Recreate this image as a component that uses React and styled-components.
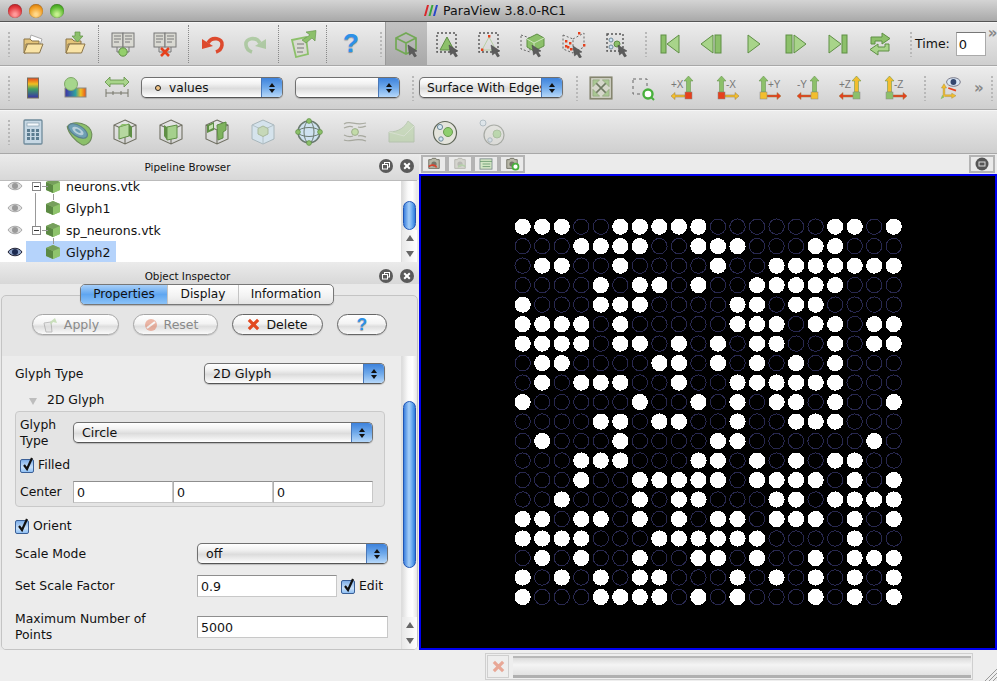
import styled, { createGlobalStyle } from "styled-components";

const GlobalStyle = createGlobalStyle`
  html, body { margin: 0; padding: 0; background: #eee; overflow: hidden; }
  body { font-family: "DejaVu Sans", "Liberation Sans", sans-serif; color: #111; }
`;

const Window = styled.div`
  width: 997px; height: 681px; display: flex; flex-direction: column; overflow: hidden;
`;
const TitleBar = styled.div`
  height: 21px; display: grid; grid-template-columns: 1fr auto 1fr; align-items: center;
  background: linear-gradient(#d4d4d4, #a9a9a9); border-bottom: 1px solid #555;
  font-size: 12.6px;
`;
const Lights = styled.div`display: flex; gap: 7px; padding-left: 8px;`;
const Light = styled.span`
  width: 14px; height: 14px; border-radius: 50%; border: 0;
  background: radial-gradient(circle at 50% 75%, ${p => p.$hi} 10%, ${p => p.$c} 60%, ${p => p.$lo} 100%);
  box-shadow: inset 0 0 1px #0008;
`;
const TitleText = styled.div`display: flex; align-items: center; gap: 5px; padding-right: 7px;`;
const Toolbar = styled.div`
  height: 43px; flex: none; display: flex; align-items: center; padding-left: 7px;
  background: linear-gradient(#ededed, #cfcfcf); border-bottom: 1px solid #a8a8a8;
  box-shadow: inset 0 1px 0 #f6f6f6;
`;
const Handle = styled.i`
  width: 5px; height: 26px; flex: none; margin-left: ${p => p.$ml || 0}px;
  background-image: radial-gradient(circle, #b8b8b8 1px, transparent 1.4px);
  background-size: 4px 4px;
`;
const Tool = styled.div`
  width: ${p => p.$w || 42}px; flex: none; display: flex; align-items: center; justify-content: center;
  margin-left: ${p => p.$ml || 0}px;
  background: ${p => p.$active ? "linear-gradient(#c2c2c2, #a9a9a9)" : "none"};
  box-shadow: ${p => p.$active ? "inset 1px 0 0 #999" : "none"};
  align-self: ${p => p.$active ? "stretch" : "auto"};
  height: ${p => p.$active ? "auto" : "40px"};
`;
const Divider = styled.i`
  width: 0; height: 38px; flex: none; margin: 0 3px 0 2px; border-left: 1px dotted #888;
`;
const Chevrons = styled.span`
  color: #888; font-size: 15px; font-weight: bold; flex: none;
  margin-left: ${p => p.$ml || 0}px;
  align-self: ${p => p.$top ? "flex-start" : "auto"};
  margin-top: ${p => p.$top ? "2px" : "0"};
`;
const TimeLabel = styled.span`font-size: 12.5px; margin-left: 1px; flex: none;`;
const TimeInput = styled.div`
  width: 26px; height: 22px; margin-left: 6px; background: #fff; border: 1px solid #aaa; border-top-color: #777;
  font-size: 13px; padding-left: 2px; line-height: 23px; box-sizing: content-box; flex: none;
`;

const ComboBox = styled.div`
  width: ${p => p.$w}px; height: 21px; box-sizing: border-box; flex: none; position: relative;
  margin-left: ${p => p.$ml || 0}px;
  display: flex; align-items: center; border: 1px solid #707070; border-bottom-color: #555; border-radius: 5px; overflow: hidden;
  background: linear-gradient(#fff 0, #f2f2f2 30%, #dcdcdc 55%, #f2f2f2 85%, #fff 100%);
  font-size: ${p => p.$fs || 12.6}px; white-space: nowrap;
  box-shadow: 0 1px 1px #0003;
`;
const ComboText = styled.span`flex: 1; overflow: hidden; padding-left: ${p => p.$pl || 7}px; display: flex; align-items: center; gap: 8px;`;
const ComboArrows = styled.span`
  width: 20px; height: 100%; flex: none; display: flex; flex-direction: column; align-items: center; justify-content: center; gap: 2px;
  background: linear-gradient(#3d82dc, #6fa9ea 50%, #b6d8fa); border-left: 1px solid #4a78b8;
  &::before, &::after { content: ""; border-left: 3px solid transparent; border-right: 3px solid transparent; }
  &::before { border-bottom: 4px solid #111; }
  &::after { border-top: 4px solid #111; }
`;
const ValueDot = styled.i`
  width: 4px; height: 4px; border-radius: 50%; background: #f3c586; border: 1px solid #222; margin-left: 6px; flex: none;
`;

const Main = styled.div`flex: 1; display: flex; min-height: 0;`;
const LeftColumn = styled.div`width: 419px; flex: none; display: flex; flex-direction: column; background: #e9e9e9;`;
const DockHead = styled.div`
  height: ${p => p.$h}px; flex: none; box-sizing: border-box; padding-top: ${p => p.$pt}px; position: relative;
  text-align: center; font-size: 10.4px; line-height: 14px;
  background: linear-gradient(#ebebeb, #d8d8d8);
  padding-right: 44px;
`;
const DockIcons = styled.div`
  position: absolute; right: 5px; top: ${p => p.$top}px; display: flex; gap: 7px;
`;
const TreePanel = styled.div`
  height: 82px; flex: none; display: flex; background: #fff; margin-right: 2px; overflow: hidden;
  border-top: 1px solid #bbb; box-sizing: border-box;
`;
const TreeRows = styled.div`flex: 1; margin-top: -6px; min-width: 0;`;
const TreeRow = styled.div`height: 22px; display: flex; align-items: center; font-size: 12.5px; position: relative;`;
const EyeCell = styled.div`width: 26px; flex: none; display: flex; justify-content: center; padding-left: 4px; box-sizing: border-box;`;
const TreeCell = styled.div`
  display: flex; align-items: center; gap: 0; height: 100%; position: relative;
  padding-left: ${p => p.$pl}px; padding-right: ${p => p.$pr || 0}px;
  background: ${p => p.$selected ? "#b5d3fb" : "none"};
`;
const TreeLabel = styled.span`margin-left: 5px;`;
const ExpandBox = styled.i`
  position: absolute; left: 6px; top: 7px; width: 7px; height: 7px; background: #fff; border: 1px solid #888;
  &::before { content: ""; position: absolute; left: 1px; right: 1px; top: 3px; height: 1px; background: #333; }
  &::after { content: ""; position: absolute; left: 9px; width: 6px; top: 3px; height: 1px; background: #999; }
`;
const TreeLine = styled.i`
  position: absolute; left: ${p => p.$x}px; top: ${p => p.$y}px; width: 1px; height: ${p => p.$h}px; background: #999;
`;

const ScrollBar = styled.div`width: 16px; flex: none; display: flex; flex-direction: column; background: #fff; border-left: 1px solid #ddd; box-sizing: border-box;`;
const ScrollTrack = styled.div`
  flex: 1; padding: ${p => p.$top}px 1px 0 1px; min-height: 0; overflow: hidden;
  background: linear-gradient(90deg, #dcdcdc, #fafafa 40%, #fff 70%, #e6e6e6);
`;
const ScrollThumb = styled.div`
  height: ${p => p.$h}px; border-radius: 7px; border: 1px solid #1f55b4;
  background: linear-gradient(90deg, #3c80de, #a6cff8 45%, #6fb0f2 70%, #2f79da);
`;
const ScrollArrows = styled.div`
  height: ${p => p.$h}px; flex: none; display: flex; flex-direction: column; align-items: center; justify-content: space-around;
  background: linear-gradient(90deg, #e8e8e8, #fff);
  &::before, &::after { content: ""; border-left: 4px solid transparent; border-right: 4px solid transparent; }
  &::before { border-bottom: 6px solid #666; }
  &::after { border-top: 6px solid #666; }
`;

const Tabs = styled.div`
  display: flex; width: 254px; height: 21px; margin-left: 80px; position: relative; z-index: 1; flex: none;
  border: 1px solid #777; border-radius: 5px; overflow: hidden; box-sizing: border-box; background: linear-gradient(#fff, #f2f2f2 60%, #e4e4e4);
  box-shadow: 0 1px 1px #0003;
`;
const Tab = styled.div`
  width: ${p => p.$w}px; flex: none; text-align: center; font-size: 12.2px; line-height: 19px; box-sizing: border-box;
  border-right: 1px solid #c4c4c4;
  background: ${p => p.$active ? "linear-gradient(#a8cff8, #5fa6f0 50%, #8cc3f8)" : "none"};
  &:last-child { border-right: 0; }
`;
const Pane = styled.div`
  flex: 1; margin: -10px 1px 0 1px; padding-top: 18px; display: flex; flex-direction: column; min-height: 0;
  background: #e5e5e5; border: 1px solid #c4c4c4; border-radius: 5px; overflow: hidden;
`;
const ActionRow = styled.div`display: flex; gap: 14px; padding-left: 30px; height: 21px; flex: none; margin-bottom: 21px;`;
const PillButton = styled.div`
  width: ${p => p.$w}px; box-sizing: border-box; border: 1px solid ${p => p.$off ? "#a6a6a6" : "#666"}; border-radius: 11px;
  background: linear-gradient(#fff, #f3f3f3 45%, #dedede 60%, #fafafa);
  color: ${p => p.$off ? "#8a8a8a" : "#111"}; font-size: 12.5px;
  display: flex; align-items: center; justify-content: center; gap: 6px;
  padding-right: ${p => p.$pr || 0}px;
  box-shadow: 0 1px 1px #0002;
`;
const HelpMark = styled.span`color: #2c90e8; font: bold ${p => p.$size}px "Liberation Sans", sans-serif; text-shadow: 0 1px 1px #0005;`;

const FormArea = styled.div`flex: 1; display: flex; min-height: 0; background: #ececec;`;
const Form = styled.div`flex: 1; min-width: 0; padding-left: 13px; overflow: hidden; font-size: 12.4px; line-height: 16px;`;
const FieldRow = styled.div`
  display: grid; grid-template-columns: ${p => p.$label}px ${p => p.$field}px; align-items: center; width: max-content;
  margin-top: ${p => p.$mt}px; height: ${p => p.$h}px;
`;
const SectionRow = styled.div`display: flex; align-items: center; height: 16px; margin: 8px 0 3px 14px; gap: 10px;`;
const Triangle = styled.i`
  width: 0; height: 0; border-left: 4px solid transparent; border-right: 4px solid transparent; border-top: 7px solid #bdbdbd; margin-top: 2px;
`;
const Group = styled.div`
  width: 370px; height: 96px; box-sizing: border-box; padding: 4px 11px 4px 4px; background: #e4e4e4;
  border: 1px solid #c9c9c9; border-radius: 4px;
`;
const GroupRow = styled.div`
  display: grid; grid-template-columns: 53px 300px; align-items: center; height: ${p => p.$h}px; margin-top: ${p => p.$mt}px;
`;
const TextField = styled.div`
  height: 22px; box-sizing: border-box; background: #fff; border: 1px solid #c8c8c8; border-top-color: #8e8e8e; border-left-color: #b0b0b0;
  padding-left: 3px; font-size: 12.6px; line-height: 21px; width: ${p => p.$w ? p.$w + "px" : "auto"};
`;
const TripleField = styled.div`display: grid; grid-template-columns: 100px 100px 100px;`;
const CheckRow = styled.div`display: flex; align-items: center; height: 16px; gap: 4px; margin-top: ${p => p.$mt || 0}px; margin-left: ${p => p.$ml || 0}px;`;
const CheckBox = styled.i`
  width: 14px; height: 14px; margin-top: 2px; box-sizing: border-box; position: relative; flex: none;
  background: linear-gradient(#7eaee8, #c9e1fa 60%, #8fc0f4); border: 1px solid #3a5f96; border-radius: 2px;
`;
const EditCell = styled.div`display: flex; align-items: center; gap: 4px;`;

const ViewColumn = styled.div`flex: 1; display: flex; flex-direction: column; min-width: 0; background: #e9e9e9;`;
const ViewStrip = styled.div`height: 20px; flex: none; display: flex; align-items: center; padding: 0 2px; background: #ebebeb; gap: 0;`;
const ViewButton = styled.div`
  width: 26px; height: 18px; box-sizing: border-box; border: 2px solid #b4b4b4;
  display: flex; align-items: center; justify-content: center; background: #eaeaea;
  margin-left: ${p => p.$auto ? "auto" : "0"};
`;
const RenderView = styled.div`flex: 1; background: #000; border: 2px solid #0000f0; min-height: 0;`;
const Canvas = styled.svg`display: block; width: 100%; height: 100%;`;

const StatusBar = styled.div`
  height: 31px; flex: none; display: flex; align-items: flex-start; background: #eeeeee; padding: 3px 0 0 485px; box-sizing: border-box; position: relative;
`;
const StatusBox = styled.div`
  width: 488px; height: 27px; box-sizing: border-box; display: flex; align-items: center; border: 1px solid #cfcfcf; padding-left: 1px;
`;
const ClearBox = styled.div`
  width: 22px; height: 23px; box-sizing: border-box; border: 1px solid #cfcfcf; flex: none; display: flex; align-items: center; justify-content: center;
`;
const Progress = styled.div`
  flex: 1; height: 22px; margin: 0 1px 0 4px; box-sizing: border-box; border-top: 2px solid #b8b8b8; border-bottom: 3px solid #b0b0b0;
  background: linear-gradient(#dcdcdc, #f4f4f4 40%, #e2e2e2);
`;
const Grip = styled.svg`position: absolute; right: 0; bottom: 0;`;
const Svg = styled.svg`display: block; flex: none; opacity: ${p => p.$dim ? 0.42 : 1};`;

const I = ({ size = 28, dim, children }) => (
  <Svg width={size} height={size} viewBox="0 0 28 28" $dim={dim}>{children}</Svg>
);

const GREEN = "#8cc06a", DGREEN = "#5f8f45", RED = "#e6401c", YEL = "#f2be2e";

const Cursor = ({ x = 0, y = 0 }) => (
  <path transform={`translate(${x} ${y})`} d="M0 0 L9 6 L6 6.8 L8.5 11 L6.5 12 L4 8 L1.5 10 Z" fill="#5c5c5c" stroke="#444" strokeWidth=".5" />
);
const Folder = () => (
  <>
    <path d="M5 9h6l2 2h7v3H7v9H5z" fill="#e4c47a" stroke="#8a7448" />
    <path d="M5 23 L8.5 14 H24 L20.5 23 Z" fill="#f9e3a6" stroke="#8a7448" />
  </>
);
const OpenIcon = () => (
  <I><path d="M12 5 L23 9 L21 15 L10 13 Z" fill="#fff" stroke="#aaa" /><Folder /></I>
);
const ImportIcon = () => (
  <I><Folder /><path d="M14 2h5v4h3l-5.5 6L11 6h3z" fill={GREEN} stroke={DGREEN} strokeWidth=".7" /></I>
);
const Servers = () => (
  <>
    {[3, 14].map(x => (
      <g key={x}>
        <rect x={x} y="3" width="11" height="14" fill="#d9d9d2" stroke="#777" />
        <path d={`M${x + 2} 6h7M${x + 2} 9h7M${x + 2} 12h5`} stroke="#7a7a7a" fill="none" />
      </g>
    ))}
    <path d="M8 17v5h12v-5" fill="none" stroke="#777" />
  </>
);
const ConnectIcon = () => (<I><Servers /><circle cx="14" cy="22" r="4.2" fill="#94cf6c" stroke={DGREEN} /></I>);
const DisconnectIcon = () => (
  <I><Servers /><path d="M10 18l8 8M18 18l-8 8" stroke={RED} strokeWidth="2.6" /></I>
);
const UndoIcon = ({ flip, color = "#dd4a2e", dim }) => (
  <I dim={dim}>
    <g transform={flip ? "translate(28 0) scale(-1 1)" : undefined}>
      <path d="M9 13 C13 6, 24 8, 23 15 C22.5 19, 20 21, 17 22" fill="none" stroke={color} strokeWidth="3.6" />
      <path d="M3 9 L14 16 L3 19 Z" fill={color} />
    </g>
  </I>
);
const ServerArrowIcon = () => (
  <I>
    <path d="M3 10 L17 7 L19 24 L7 27 Z" fill="#d9d9d2" stroke={GREEN} strokeWidth="1.8" />
    <path d="M8 14h7M8 18h7M8 22h6" stroke="#777" />
    <path d="M13 10 L21 5 L17 2 L27 0.5 L26 11 L23 8 L17 13 Z" fill={GREEN} stroke={DGREEN} strokeWidth=".6" />
  </I>
);
const WireCube = ({ color = GREEN }) => (
  <path d="M14 3 L24 8 V19 L14 24 L4 19 V8 Z M4 8 L14 13 L24 8 M14 13 V24" fill="none" stroke={color} strokeWidth="1.7" />
);
const CubeSelectIcon = () => (<I><WireCube color="#72a855" /><Cursor x={16} y={15} /></I>);
const DashBox = ({ x = 3, y = 3, w = 19, h = 19 }) => (
  <rect x={x} y={y} width={w} height={h} fill="none" stroke="#555" strokeWidth="1.4" strokeDasharray="2 2" />
);
const SurfaceSelectIcon = () => (
  <I><DashBox /><path d="M13 7 L20 20 H6 Z" fill={GREEN} stroke={DGREEN} /><Cursor x={15} y={15} /></I>
);
const PointSelectIcon = () => (
  <I>
    <DashBox />
    <path d="M13 7 L20 20 H6 Z" fill="none" stroke="#b8cfa5" />
    <path d="M12 5h2.4v2.4H12zM5 18.5h2.4v2.4H5zM18 18.5h2.4v2.4H18z" fill={RED} />
    <Cursor x={15} y={15} />
  </I>
);
const FrustumIcon = () => (
  <I>
    <path d="M3 5 L12 8 V22 L3 19 Z" fill="none" stroke="#666" strokeDasharray="2 2" />
    <path d="M9 9 L19 4 L26 8 V16 L16 21 L9 17 Z" fill={GREEN} stroke={DGREEN} />
    <path d="M9 9 L16 13 L26 8 M16 13 V21" fill="none" stroke="#cfe6bf" />
    <Cursor x={14} y={15} />
  </I>
);
const FrustumPointsIcon = () => (
  <I>
    <path d="M3 5 L13 9 V23 L3 19 Z M13 9 L24 3 V17 L13 23" fill="none" stroke="#666" strokeDasharray="2 2" />
    <path d="M5 10h2.4v2.4H5zM9 12h2.4v2.4H9zM7 16h2.4v2.4H7zM10 18h2.4v2.4H10zM18 2h2.4v2.4H18zM23 14h2.4v2.4H23zM5 15h2.4v2.4H5z" fill={RED} />
    <Cursor x={13} y={16} />
  </I>
);
const BlockSelectIcon = () => (
  <I>
    <DashBox x={5} y={4} w={16} h={17} />
    <circle cx="9" cy="10" r="2" fill="#cfe2f2" stroke="#6f8a9a" />
    <circle cx="9" cy="17" r="2" fill="#cfe2f2" stroke="#6f8a9a" />
    <circle cx="15" cy="14" r="3" fill={GREEN} stroke={DGREEN} />
    <Cursor x={16} y={15} />
  </I>
);
const FirstIcon = () => (
  <I><rect x="5" y="5" width="5" height="18" fill={GREEN} stroke={DGREEN} /><path d="M11 14 L23 5 V23 Z" fill="#a8d48a" stroke={DGREEN} /></I>
);
const BackIcon = () => (
  <I><path d="M3 14 L15 5 V23 Z" fill="#a8d48a" stroke={DGREEN} /><rect x="17" y="5" width="6" height="18" fill={GREEN} stroke={DGREEN} /></I>
);
const PlayIcon = () => (<I><path d="M8 5 L20 14 L8 23 Z" fill="#a8d48a" stroke={DGREEN} /></I>);
const ForwardIcon = () => (
  <I><rect x="4" y="5" width="6" height="18" fill={GREEN} stroke={DGREEN} /><path d="M12 5 L24 14 L12 23 Z" fill="#a8d48a" stroke={DGREEN} /></I>
);
const LastIcon = () => (
  <I><path d="M5 5 L17 14 L5 23 Z" fill="#a8d48a" stroke={DGREEN} /><rect x="18" y="5" width="5" height="18" fill={GREEN} stroke={DGREEN} /></I>
);
const LoopIcon = () => (
  <I>
    <path d="M5 14 V7 H16 V3 L24 8.5 L16 14 V11 H9 V14 Z" fill={GREEN} stroke={DGREEN} />
    <path d="M23 14 V21 H12 V25 L4 19.5 L12 14 V17 H19 V14 Z" fill="#a8d48a" stroke={DGREEN} />
  </I>
);
const ColorMapIcon = () => (
  <I>
    <defs>
      <linearGradient id="cm" x1="0" y1="0" x2="0" y2="1">
        <stop offset="0" stopColor="#e8431c" /><stop offset=".3" stopColor="#f0c020" />
        <stop offset=".55" stopColor="#3fa060" /><stop offset="1" stopColor="#3a30a8" />
      </linearGradient>
    </defs>
    <rect x="8.5" y="4" width="11" height="20" fill="url(#cm)" stroke="#77705c" />
  </I>
);
const LegendIcon = () => (
  <I>
    <defs>
      <linearGradient id="lg" x1="0" y1="0" x2="1" y2="0">
        <stop offset="0" stopColor="#4030a8" /><stop offset=".5" stopColor="#30a0a0" />
        <stop offset=".75" stopColor="#f0c020" /><stop offset="1" stopColor="#e8501c" />
      </linearGradient>
    </defs>
    <rect x="4" y="14" width="21" height="9" fill="url(#lg)" stroke="#8a8a80" />
    <circle cx="10" cy="10" r="6.5" fill="#a6d68c" stroke="#7fa868" />
  </I>
);
const RescaleIcon = () => (
  <I>
    <path d="M2 8 L7 3 V6 H21 V3 L26 8 L21 13 V10 H7 V13 Z" fill="#a8d48a" stroke={DGREEN} strokeWidth=".8" />
    <path d="M3 19H25M3 15V23M10 17V21M18 17V21M25 15V23" fill="none" stroke="#77776a" />
  </I>
);
const ZoomFitIcon = () => (
  <I size={24}>
    <rect x="1.5" y="1.5" width="25" height="25" fill="#d5d7ca" stroke="#85856f" strokeWidth="2" />
    <path d="M6 6 L22 22 M22 6 L6 22" stroke="#6f7a62" strokeWidth="1.8" />
    <path d="M4.5 4.5h8l-8 8zM23.5 4.5v8l-8-8zM4.5 23.5v-8l8 8zM23.5 23.5h-8l8-8z" fill="#a9c893" stroke="#84966f" strokeWidth=".6" />
  </I>
);
const ZoomBoxIcon = () => (
  <I>
    <rect x="5" y="5" width="14" height="15" fill="none" stroke="#666" strokeDasharray="3 3" />
    <circle cx="20" cy="20" r="4.5" fill="#fff" stroke="#48b03c" strokeWidth="2.4" />
    <path d="M23 23l3 3" stroke="#48b03c" strokeWidth="2" />
  </I>
);
const AxisIcon = ({ label, side, square, horiz, vert }) => {
  const sx = side === "right" ? 15 : 6;
  const hPath = side === "right"
    ? "M15 21 H5 V18.5 L1 22 L5 25.5 V23 H15 Z"
    : "M13 21 H23 V18.5 L27 22 L23 25.5 V23 H13 Z";
  const vx = sx + 3.5;
  return (
    <I>
      <path d={hPath} fill={horiz} stroke="#9a7a40" strokeWidth=".5" />
      <path d={`M${vx - 2} 18 V7 H${vx - 4.5} L${vx} 2 L${vx + 4.5} 7 H${vx + 2} V18 Z`} fill={vert} stroke={DGREEN} strokeWidth=".5" />
      <rect x={sx} y="18" width="7" height="7" fill={square} stroke="#888" strokeWidth=".5" />
      <text x={side === "right" ? 1 : 14} y="14" fontSize="10" fill="#777" fontFamily="'Liberation Sans', sans-serif">{label}</text>
    </I>
  );
};
const CameraEyeIcon = () => (
  <I size={24}>
    <path d="M6 25 V14 L4 14 L7 9 L10 14 L8 14 V22 H16 V20 L21 23 L16 26 V24 H8" fill={YEL} stroke="#a88a30" strokeWidth=".5" />
    <path d="M7 25 L3 27 L5 22 Z" fill={GREEN} />
    <ellipse cx="18" cy="7" rx="8" ry="5" fill="#d9e6f4" stroke="#667" />
    <circle cx="18" cy="7" r="3.4" fill="#34466e" />
    <path d="M12 14l9 3" stroke={RED} strokeWidth="2" />
  </I>
);
const CalculatorIcon = () => (
  <I>
    <rect x="5" y="2" width="18" height="24" rx="1" fill="#c7d8e4" stroke="#6f8a9a" strokeWidth="1.3" />
    <rect x="8" y="5" width="12" height="3" fill="#f3f7fa" stroke="#7a93a3" strokeWidth=".6" />
    {[11, 15, 19].map(y => [8, 12.5, 17].map(x => (
      <rect key={`${x}-${y}`} x={x} y={y} width="3" height="3" fill="#5b7c90" />
    )))}
  </I>
);
const ClipIcon = () => (
  <I size={30}>
    <path d="M3 9 C9 2, 25 6, 26 16 C26 24, 20 27, 17 26 C10 22, 4 15, 3 9 Z" fill="#8cc06a" stroke="#6d8a5a" />
    <ellipse cx="13" cy="13" rx="10" ry="5" transform="rotate(32 13 13)" fill="#6e9fb4" stroke="#5a7f8c" />
    <ellipse cx="13" cy="13" rx="6" ry="2.8" transform="rotate(32 13 13)" fill="#b7cfda" />
    <ellipse cx="13" cy="13" rx="3" ry="1.2" transform="rotate(32 13 13)" fill="#6e9fb4" />
  </I>
);
const BoxFrame = () => (
  <path d="M14 2 L25 7 V21 L14 26 L3 21 V7 Z M3 7 L14 12 L25 7 M14 12 V26" fill="none" stroke="#6f6f62" strokeWidth="1.1" />
);
const ThresholdIcon = () => (
  <I><BoxFrame /><path d="M8 9 L18 6 V18 L8 21 Z" fill="#b6d8a0" stroke={DGREEN} /><path d="M18 6 L21 9 V20 L18 18 Z" fill={DGREEN} /><path d="M8 9 L11 6 L18 6" fill={GREEN} /></I>
);
const ContourIcon = () => (
  <I><BoxFrame /><path d="M10 9 L20 7 V20 L10 22 Z" fill="#a5d08c" stroke={DGREEN} /><path d="M10 9 L7 7 V18 L10 22 Z" fill={DGREEN} /></I>
);
const SliceIcon = () => (
  <I>
    <BoxFrame />
    <path d="M4 7 L11 4 V12 L4 15 Z" fill={DGREEN} />
    <path d="M14 7 L23 4 V12 L20 14 V20 L15 22 Z" fill="#7fb35e" stroke={DGREEN} />
    <path d="M6 8 L10 6 V10 L6 12 Z" fill="#c6e3b2" />
  </I>
);
const FadedCubeIcon = () => (
  <I>
    <path d="M14 2 L25 7 V21 L14 26 L3 21 V7 Z" fill="#d5e3ec" stroke="#a8b6bb" />
    <path d="M3 7 L14 12 L25 7 M14 12 V26" fill="none" stroke="#b2c0c6" />
    <path d="M14 8 L19 10.5 V16 L14 18.5 L9 16 V10.5 Z" fill="#c6d8b8" stroke="#a8b89a" />
  </I>
);
const SphereNodesIcon = () => (
  <I>
    <circle cx="14" cy="14" r="11" fill="#cfe2f0" stroke="#6b7a70" strokeWidth="1.6" />
    <ellipse cx="14" cy="14" rx="5" ry="11" fill="none" stroke="#6b7a70" />
    <ellipse cx="14" cy="14" rx="11" ry="4.5" fill="none" stroke="#6b7a70" />
    {[[14, 3], [14, 25], [3, 14], [25, 14]].map(([x, y]) => (
      <circle key={x + "-" + y} cx={x} cy={y} r="2.4" fill={GREEN} stroke={DGREEN} strokeWidth=".7" />
    ))}
  </I>
);
const StreamIcon = () => (
  <I>
    <g fill="none" stroke="#8b8d7e" strokeWidth="1.2" opacity=".65">
      <path d="M3 6 C9 2, 14 8, 25 5" />
      <path d="M3 10 C7 8, 10 8, 12 9 M17 9 C20 10, 22 9, 25 8" />
      <path d="M3 17 C7 19, 10 19, 12 18 M17 18 C20 17, 22 18, 25 19" />
      <path d="M3 22 C9 25, 14 19, 25 23" />
    </g>
    <circle cx="14" cy="14" r="3.4" fill="#c2dba8" stroke="#9eae8c" />
  </I>
);
const WarpIcon = () => (
  <I dim>
    <path d="M2 24 V14 C12 14, 18 9, 21 3 L27 8 V24 Z" fill="#a9cf8e" stroke="#88a878" />
    <path d="M2 14 L17 18 L27 8" fill="none" stroke="#cfe3bf" />
  </I>
);
const BlobsIcon = ({ dim }) => (
  <I dim={dim}>
    <circle cx="14" cy="15" r="11.5" fill="#e4e4dc" stroke="#5f6658" strokeWidth="1.2" />
    <circle cx="17" cy="14" r="4.5" fill="#8ecf6e" stroke="#6a9a50" />
    <circle cx="9" cy="9" r="2.6" fill="#d5e6f2" stroke="#6f8a9a" />
    <circle cx="10" cy="21" r="2.2" fill="#d5e6f2" stroke="#6f8a9a" />
  </I>
);
const BlobsOutIcon = () => (
  <I dim>
    <circle cx="16" cy="17" r="10" fill="#e4e4dc" stroke="#5f6658" strokeWidth="1.2" />
    <circle cx="19" cy="16" r="4" fill="#8ecf6e" stroke="#6a9a50" />
    <circle cx="5" cy="5" r="3" fill="#d5e6f2" stroke="#6f8a9a" />
    <circle cx="12" cy="22" r="2.2" fill="#d5e6f2" stroke="#6f8a9a" />
  </I>
);
const EyeIcon = ({ on }) => (
  <Svg width="16" height="10" viewBox="0 0 16 10">
    <path d="M1 5 C4 0, 12 0, 15 5 C12 10, 4 10, 1 5 Z" fill={on ? "#8fa4c8" : "#ddd"} stroke={on ? "#223" : "#aaa"} />
    <circle cx="8" cy="5" r="3" fill={on ? "#1c2a50" : "#999"} />
  </Svg>
);
const SmallCube = () => (
  <Svg width="16" height="16" viewBox="0 0 16 16">
    <path d="M8 1 L15 4 V12 L8 15 L1 12 V4 Z" fill="#8cc06a" />
    <path d="M1 4 L8 7 V15 L1 12 Z" fill="#5c8a44" />
    <path d="M8 7 L15 4 V12 L8 15 Z" fill="#8fc46c" />
    <path d="M1 4 L8 1 L15 4 L8 7 Z" fill="#769f5c" />
  </Svg>
);
const FloatIcon = () => (
  <Svg width="14" height="14" viewBox="0 0 14 14">
    <circle cx="7" cy="7" r="7" fill="#5a5a5a" />
    <rect x="5.5" y="3.5" width="5" height="4.5" fill="none" stroke="#fff" />
    <rect x="3.5" y="5.5" width="5" height="4.5" fill="#5a5a5a" stroke="#fff" />
  </Svg>
);
const CloseIcon = () => (
  <Svg width="14" height="14" viewBox="0 0 14 14">
    <circle cx="7" cy="7" r="7" fill="#5a5a5a" />
    <path d="M4.2 4.2 L9.8 9.8 M9.8 4.2 L4.2 9.8" stroke="#fff" strokeWidth="2" />
  </Svg>
);
const RedX = ({ size = 14, dim }) => (
  <Svg width={size} height={size} viewBox="0 0 14 14" $dim={dim}>
    <path d="M2 2 L12 12 M12 2 L2 12" stroke="#e2481f" strokeWidth="3.4" />
  </Svg>
);
const NoEntry = () => (
  <Svg width="14" height="14" viewBox="0 0 14 14" $dim>
    <circle cx="7" cy="7" r="6" fill="#e0603a" />
    <path d="M3 10 L11 4" stroke="#fff" strokeWidth="2" />
  </Svg>
);
const ApplyMark = () => (
  <Svg width="16" height="16" viewBox="0 0 16 16" $dim>
    <path d="M2 6 L9 5 L10 15 L4 15 Z" fill="#ddd" stroke="#777" />
    <path d="M8 5 L13 1 L15 6 L11 5 L9 8 Z" fill={GREEN} />
  </Svg>
);
const Check = () => (
  <svg width="14" height="18" viewBox="0 0 14 18" style={{ position: "absolute", left: 0, top: -5 }}>
    <path d="M3 10 L6 14 L11 3" fill="none" stroke="#111" strokeWidth="2.2" />
  </svg>
);
const ParaLogo = () => (
  <svg width="14" height="11" viewBox="0 0 14 11">
    <path d="M0 11 L3 0 H5 L2 11 Z" fill="#d8282c" />
    <path d="M4.5 11 L7.5 0 H9.5 L6.5 11 Z" fill="#39a63a" />
    <path d="M9 11 L12 0 H14 L11 11 Z" fill="#2848c8" />
  </svg>
);
const Cam = ({ children, dim }) => (
  <Svg width="18" height="14" viewBox="0 0 18 16" $dim={dim}>
    <path d="M3 3h3l1-1.5h4L12 3h3v10H3z" fill="#b8b8a8" stroke="#6a6a5c" />
    <circle cx="9" cy="8" r="3" fill="#77776a" />
    {children}
  </Svg>
);

const CELLS = [
  "11100111110000001101",
  "00011110011100011000",
  "01100100001001111111",
  "00001011010011111000",
  "10001110000110110000",
  "11110100000111011011",
  "11110110101011001011",
  "01100001101010101000",
  "01011100100111111000",
  "10000010010101101001",
  "00001101100100111000",
  "01000100001100000010",
  "00011100011010101100",
  "00010011111011110101",
  "00100010110001101111",
  "11011010101101110101",
  "11110001111110000100",
  "01010010011010010111",
  "10101011000101010101",
  "10001111010100010101",
];

// glyph centres come straight from the screenshot, in page pixels
const GlyphGrid = () => (
  <Canvas viewBox="421 176 574 472" preserveAspectRatio="none" shapeRendering="crispEdges">
    {CELLS.map((row, r) => row.split("").map((cell, c) => (
      <circle
        key={`${r}-${c}`}
        cx={522.67 + c * 19.53}
        cy={226.67 + r * 19.49}
        r={cell === "1" ? 8.1 : 7.7}
        fill={cell === "1" ? "#fff" : "none"}
        stroke={cell === "1" ? "none" : "#28284f"}
      />
    )))}
  </Canvas>
);

export default function App() {
  return (
    <Window>
      <GlobalStyle />
      <TitleBar>
        <Lights>
          <Light $c="#e0353a" $hi="#ff9a9a" $lo="#9c1418" />
          <Light $c="#f09a1e" $hi="#ffd88a" $lo="#b0600c" />
          <Light $c="#58b82e" $hi="#c6f08e" $lo="#2e7c14" />
        </Lights>
        <TitleText><ParaLogo />ParaView 3.8.0-RC1</TitleText>
        <div />
      </TitleBar>

      <Toolbar>
        <Handle />
        <Tool><OpenIcon /></Tool>
        <Tool><ImportIcon /></Tool>
        <Divider />
        <Tool><ConnectIcon /></Tool>
        <Tool><DisconnectIcon /></Tool>
        <Divider />
        <Tool><UndoIcon /></Tool>
        <Tool><UndoIcon flip color="#6fae55" dim /></Tool>
        <Divider />
        <Tool><ServerArrowIcon /></Tool>
        <Divider />
        <Tool><HelpMark $size={26}>?</HelpMark></Tool>
        <Handle $ml={7} />
        <Tool $active $ml={1}><CubeSelectIcon /></Tool>
        <Tool><SurfaceSelectIcon /></Tool>
        <Tool><PointSelectIcon /></Tool>
        <Tool><FrustumIcon /></Tool>
        <Tool><FrustumPointsIcon /></Tool>
        <Tool><BlockSelectIcon /></Tool>
        <Handle $ml={7} />
        <Tool><FirstIcon /></Tool>
        <Tool><BackIcon /></Tool>
        <Tool><PlayIcon /></Tool>
        <Tool><ForwardIcon /></Tool>
        <Tool><LastIcon /></Tool>
        <Tool><LoopIcon /></Tool>
        <Handle $ml={8} />
        <TimeLabel>Time:</TimeLabel>
        <TimeInput>0</TimeInput>
        <Chevrons $ml={2} $top>»</Chevrons>
      </Toolbar>

      <Toolbar>
        <Handle />
        <Tool><ColorMapIcon /></Tool>
        <Tool><LegendIcon /></Tool>
        <Tool><RescaleIcon /></Tool>
        <ComboBox $w={142} $ml={3} $fs={12.2}>
          <ComboText><ValueDot />values</ComboText>
          <ComboArrows />
        </ComboBox>
        <ComboBox $w={105} $ml={12}>
          <ComboText />
          <ComboArrows />
        </ComboBox>
        <Handle $ml={11} />
        <ComboBox $w={144} $ml={3} $fs={12.2}>
          <ComboText>Surface With Edges</ComboText>
          <ComboArrows />
        </ComboBox>
        <Handle $ml={12} />
        <Tool $w={41}><ZoomFitIcon /></Tool>
        <Tool><ZoomBoxIcon /></Tool>
        <Tool><AxisIcon label="+X" side="right" square={RED} horiz={YEL} vert={GREEN} /></Tool>
        <Tool><AxisIcon label="-X" side="left" square={RED} horiz={YEL} vert={GREEN} /></Tool>
        <Tool><AxisIcon label="+Y" side="left" square={YEL} horiz={RED} vert={GREEN} /></Tool>
        <Tool><AxisIcon label="-Y" side="right" square={YEL} horiz={RED} vert={GREEN} /></Tool>
        <Tool><AxisIcon label="+Z" side="right" square={GREEN} horiz={RED} vert={YEL} /></Tool>
        <Tool><AxisIcon label="-Z" side="left" square={GREEN} horiz={RED} vert={YEL} /></Tool>
        <Handle $ml={8} />
        <Tool $w={28} $ml={8}><CameraEyeIcon /></Tool>
        <Chevrons $ml={10}>»</Chevrons>
        <Handle $ml={6} />
      </Toolbar>

      <Toolbar>
        <Handle />
        <Tool><CalculatorIcon /></Tool>
        <Tool $ml={4}><ClipIcon /></Tool>
        <Tool $ml={4}><ThresholdIcon /></Tool>
        <Tool $ml={4}><ContourIcon /></Tool>
        <Tool $ml={4}><SliceIcon /></Tool>
        <Tool $ml={4}><FadedCubeIcon /></Tool>
        <Tool $ml={4}><SphereNodesIcon /></Tool>
        <Tool $ml={4}><StreamIcon /></Tool>
        <Tool $ml={4}><WarpIcon /></Tool>
        <Tool $ml={2}><BlobsIcon /></Tool>
        <Tool $ml={5}><BlobsOutIcon /></Tool>
      </Toolbar>

      <Main>
        <LeftColumn>
          <DockHead $h={26} $pt={6}>
            Pipeline Browser
            <DockIcons $top={5}><FloatIcon /><CloseIcon /></DockIcons>
          </DockHead>
          <TreePanel>
            <TreeRows>
              <TreeRow>
                <EyeCell><EyeIcon /></EyeCell>
                <TreeCell $pl={19}><ExpandBox /><SmallCube /><TreeLabel>neurons.vtk</TreeLabel></TreeCell>
              </TreeRow>
              <TreeRow>
                <EyeCell><EyeIcon /></EyeCell>
                <TreeLine $x={35} $y={-4} $h={26} />
                <TreeLine $x={53} $y={-3} $h={6} />
                <TreeCell $pl={19}><SmallCube /><TreeLabel>Glyph1</TreeLabel></TreeCell>
              </TreeRow>
              <TreeRow>
                <EyeCell><EyeIcon /></EyeCell>
                <TreeLine $x={35} $y={-2} $h={10} />
                <TreeCell $pl={19}><ExpandBox /><SmallCube /><TreeLabel>sp_neurons.vtk</TreeLabel></TreeCell>
              </TreeRow>
              <TreeRow>
                <EyeCell><EyeIcon on /></EyeCell>
                <TreeCell $pl={19} $pr={6} $selected><SmallCube /><TreeLabel>Glyph2</TreeLabel></TreeCell>
                <TreeLine $x={53} $y={-3} $h={6} />
              </TreeRow>
            </TreeRows>
            <ScrollBar>
              <ScrollTrack $top={20}><ScrollThumb $h={27} /></ScrollTrack>
              <ScrollArrows $h={32} />
            </ScrollBar>
          </TreePanel>

          <DockHead $h={22} $pt={7}>
            Object Inspector
            <DockIcons $top={7}><FloatIcon /><CloseIcon /></DockIcons>
          </DockHead>
          <Tabs>
            <Tab $w={87} $active>Properties</Tab>
            <Tab $w={71}>Display</Tab>
            <Tab $w={94}>Information</Tab>
          </Tabs>
          <Pane>
            <ActionRow>
              <PillButton $w={87} $off $pr={10}><ApplyMark />Apply</PillButton>
              <PillButton $w={85} $off $pr={9}><NoEntry />Reset</PillButton>
              <PillButton $w={91}><RedX size={13} />Delete</PillButton>
              <PillButton $w={50}><HelpMark $size={17}>?</HelpMark></PillButton>
            </ActionRow>
            <FormArea>
              <Form>
                <FieldRow $label={189} $field={181} $mt={7} $h={21}>
                  <span>Glyph Type</span>
                  <ComboBox $w={181}><ComboText $pl={8}>2D Glyph</ComboText><ComboArrows /></ComboBox>
                </FieldRow>
                <SectionRow><Triangle />2D Glyph</SectionRow>
                <Group>
                  <GroupRow $h={33}>
                    <span>Glyph<br />Type</span>
                    <ComboBox $w={300}><ComboText $pl={8}>Circle</ComboText><ComboArrows /></ComboBox>
                  </GroupRow>
                  <CheckRow $mt={8}><CheckBox><Check /></CheckBox>Filled</CheckRow>
                  <GroupRow $h={22} $mt={8}>
                    <span>Center</span>
                    <TripleField><TextField>0</TextField><TextField>0</TextField><TextField>0</TextField></TripleField>
                  </GroupRow>
                </Group>
                <CheckRow $mt={11}><CheckBox><Check /></CheckBox>Orient</CheckRow>
                <FieldRow $label={182} $field={191} $mt={9} $h={21}>
                  <span>Scale Mode</span>
                  <ComboBox $w={191}><ComboText $pl={8}>off</ComboText><ComboArrows /></ComboBox>
                </FieldRow>
                <FieldRow $label={182} $field={191} $mt={11} $h={22}>
                  <span>Set Scale Factor</span>
                  <EditCell>
                    <TextField $w={140}>0.9</TextField>
                    <CheckBox><Check /></CheckBox>Edit
                  </EditCell>
                </FieldRow>
                <FieldRow $label={182} $field={191} $mt={14} $h={32}>
                  <span>Maximum Number of<br />Points</span>
                  <TextField>5000</TextField>
                </FieldRow>
              </Form>
              <ScrollBar>
                <ScrollTrack $top={45}><ScrollThumb $h={165} /></ScrollTrack>
                <ScrollArrows $h={32} />
              </ScrollBar>
            </FormArea>
          </Pane>
        </LeftColumn>

        <ViewColumn>
          <ViewStrip>
            <ViewButton><Cam><path d="M3 11 C6 8, 11 9, 12 12" fill="none" stroke="#d9432f" strokeWidth="2" /></Cam></ViewButton>
            <ViewButton><Cam dim><path d="M15 11 C12 8, 8 9, 7 12" fill="none" stroke="#6fae55" strokeWidth="2" /></Cam></ViewButton>
            <ViewButton>
              <Svg width="16" height="12" viewBox="0 0 18 14">
                <rect x="2" y="1" width="14" height="12" fill="#d2e6c4" stroke="#7a8a8a" />
                <path d="M2 4h14M5 7h9M5 10h9" stroke="#6a9a70" />
              </Svg>
            </ViewButton>
            <ViewButton><Cam><circle cx="13" cy="11" r="3.4" fill="#fff" stroke="#48b03c" strokeWidth="2" /></Cam></ViewButton>
            <ViewButton $auto>
              <Svg width="14" height="14" viewBox="0 0 14 14">
                <circle cx="7" cy="7" r="6.5" fill="#555" />
                <rect x="4" y="5" width="6" height="4" fill="none" stroke="#ddd" />
              </Svg>
            </ViewButton>
          </ViewStrip>
          <RenderView><GlyphGrid /></RenderView>
        </ViewColumn>
      </Main>

      <StatusBar>
        <StatusBox>
          <ClearBox><RedX size={13} dim /></ClearBox>
          <Progress />
        </StatusBox>
        <Grip width="13" height="13" viewBox="0 0 13 13">
          <path d="M13 1 L1 13 M13 5 L5 13 M13 9 L9 13" stroke="#999" fill="none" />
        </Grip>
      </StatusBar>
    </Window>
  );
}
